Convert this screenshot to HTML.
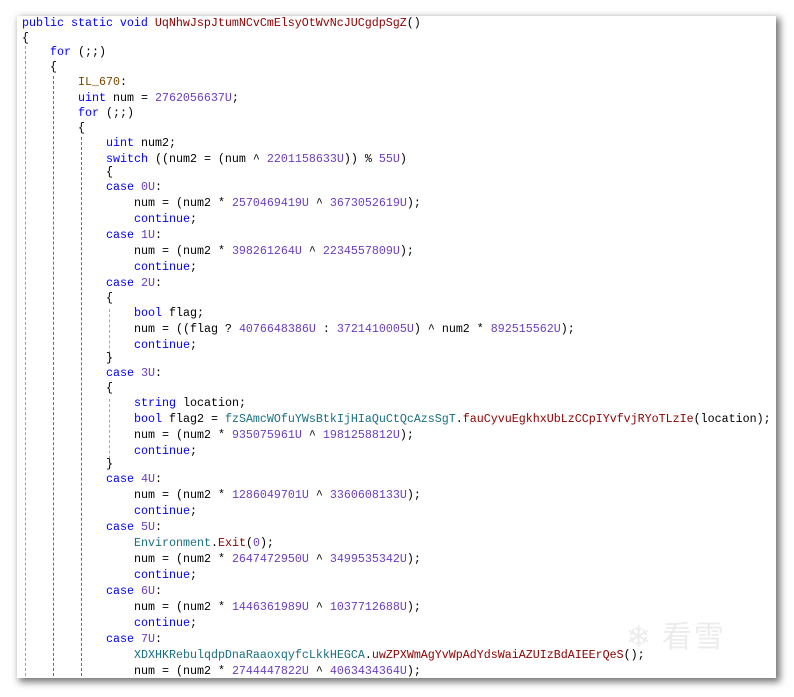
<!DOCTYPE html>
<html><head><meta charset="utf-8"><style>
html,body{margin:0;padding:0;background:#fff;width:794px;height:697px;overflow:hidden}
#p{position:absolute;left:17px;top:16px;width:759px;height:662px;background:#fff;box-shadow:3px 3px 7px 1px rgba(0,0,0,.55);overflow:hidden}
.l{position:absolute;left:0;height:16px;line-height:16px;white-space:pre;font-family:"Liberation Mono","Noto Sans CJK SC",monospace;font-size:11.67px;color:#000}
.k{color:#0000ff}.m{color:#8b0000}.t{color:#1a6f7f}.n{color:#6a3dbf}.b{color:#7a4800}
.g{position:absolute;width:0;border-left:1px dashed}
#wm{position:absolute;left:626px;top:612px;font-family:"Noto Sans CJK SC",sans-serif;font-size:30px;color:#ececec;letter-spacing:2px}
</style></head><body>
<div id="p">
<div class="g" style="left:8px;top:30px;height:640px;border-color:#7f9fff"></div>
<div class="g" style="left:36px;top:60px;height:610px;border-color:#e020c0"></div>
<div class="g" style="left:64px;top:121px;height:549px;border-color:#e020c0"></div>
<div class="g" style="left:92px;top:293px;height:50px;border-color:#aaa"></div>
<div class="g" style="left:92px;top:383px;height:70px;border-color:#aaa"></div>
</div>
<div id="wm">❄ 看雪</div>
<div style="position:absolute;left:0;top:0">
<div class="l" style="left:22px;top:15px"><span class="k">public static void </span><span class="m">UqNhwJspJtumNCvCmElsyOtWvNcJUCgdpSgZ</span>()</div>
<div class="l" style="left:22px;top:30px">{</div>
<div class="l" style="left:50px;top:44px"><span class="k">for</span> (;;)</div>
<div class="l" style="left:50px;top:59px">{</div>
<div class="l" style="left:78px;top:74px"><span class="b">IL_670</span>:</div>
<div class="l" style="left:78px;top:90px"><span class="k">uint</span> num = <span class="n">2762056637U</span>;</div>
<div class="l" style="left:78px;top:105px"><span class="k">for</span> (;;)</div>
<div class="l" style="left:78px;top:120px">{</div>
<div class="l" style="left:106px;top:135px"><span class="k">uint</span> num2;</div>
<div class="l" style="left:106px;top:151px"><span class="k">switch</span> ((num2 = (num ^ <span class="n">2201158633U</span>)) % <span class="n">55U</span>)</div>
<div class="l" style="left:106px;top:164px">{</div>
<div class="l" style="left:106px;top:179px"><span class="k">case</span> <span class="n">0U</span>:</div>
<div class="l" style="left:134px;top:195px">num = (num2 * <span class="n">2570469419U</span> ^ <span class="n">3673052619U</span>);</div>
<div class="l" style="left:134px;top:211px"><span class="k">continue</span>;</div>
<div class="l" style="left:106px;top:227px"><span class="k">case</span> <span class="n">1U</span>:</div>
<div class="l" style="left:134px;top:243px">num = (num2 * <span class="n">398261264U</span> ^ <span class="n">2234557809U</span>);</div>
<div class="l" style="left:134px;top:259px"><span class="k">continue</span>;</div>
<div class="l" style="left:106px;top:275px"><span class="k">case</span> <span class="n">2U</span>:</div>
<div class="l" style="left:106px;top:290px">{</div>
<div class="l" style="left:134px;top:305px"><span class="k">bool</span> flag;</div>
<div class="l" style="left:134px;top:321px">num = ((flag ? <span class="n">4076648386U</span> : <span class="n">3721410005U</span>) ^ num2 * <span class="n">892515562U</span>);</div>
<div class="l" style="left:134px;top:337px"><span class="k">continue</span>;</div>
<div class="l" style="left:106px;top:350px">}</div>
<div class="l" style="left:106px;top:365px"><span class="k">case</span> <span class="n">3U</span>:</div>
<div class="l" style="left:106px;top:380px">{</div>
<div class="l" style="left:134px;top:395px"><span class="k">string</span> location;</div>
<div class="l" style="left:134px;top:411px"><span class="k">bool</span> flag2 = <span class="t">fzSAmcWOfuYWsBtkIjHIaQuCtQcAzsSgT</span>.<span class="m">fauCyvuEgkhxUbLzCCpIYvfvjRYoTLzIe</span>(location);</div>
<div class="l" style="left:134px;top:427px">num = (num2 * <span class="n">935075961U</span> ^ <span class="n">1981258812U</span>);</div>
<div class="l" style="left:134px;top:443px"><span class="k">continue</span>;</div>
<div class="l" style="left:106px;top:456px">}</div>
<div class="l" style="left:106px;top:471px"><span class="k">case</span> <span class="n">4U</span>:</div>
<div class="l" style="left:134px;top:487px">num = (num2 * <span class="n">1286049701U</span> ^ <span class="n">3360608133U</span>);</div>
<div class="l" style="left:134px;top:503px"><span class="k">continue</span>;</div>
<div class="l" style="left:106px;top:519px"><span class="k">case</span> <span class="n">5U</span>:</div>
<div class="l" style="left:134px;top:535px"><span class="t">Environment</span>.<span class="m">Exit</span>(<span class="n">0</span>);</div>
<div class="l" style="left:134px;top:551px">num = (num2 * <span class="n">2647472950U</span> ^ <span class="n">3499535342U</span>);</div>
<div class="l" style="left:134px;top:567px"><span class="k">continue</span>;</div>
<div class="l" style="left:106px;top:583px"><span class="k">case</span> <span class="n">6U</span>:</div>
<div class="l" style="left:134px;top:599px">num = (num2 * <span class="n">1446361989U</span> ^ <span class="n">1037712688U</span>);</div>
<div class="l" style="left:134px;top:615px"><span class="k">continue</span>;</div>
<div class="l" style="left:106px;top:631px"><span class="k">case</span> <span class="n">7U</span>:</div>
<div class="l" style="left:134px;top:647px"><span class="t">XDXHKRebulqdpDnaRaaoxqyfcLkkHEGCA</span>.<span class="m">uwZPXWmAgYvWpAdYdsWaiAZUIzBdAIEErQeS</span>();</div>
<div class="l" style="left:134px;top:663px">num = (num2 * <span class="n">2744447822U</span> ^ <span class="n">4063434364U</span>);</div>
</div>
<div style="position:absolute;left:776px;top:0;width:18px;height:697px;background:#fff;z-index:-1"></div>
</body></html>
